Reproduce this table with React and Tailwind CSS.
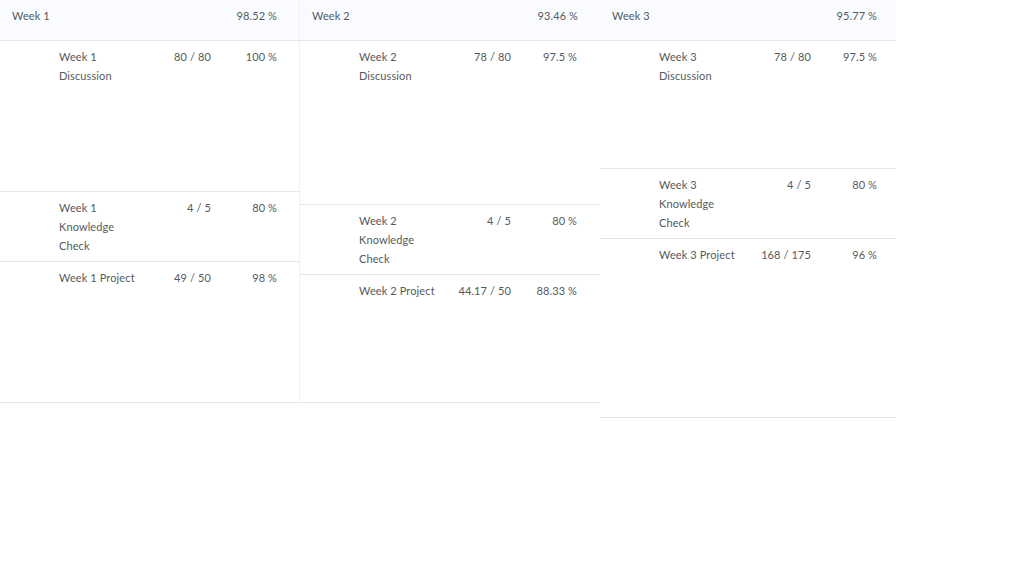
const weeks = [
  {
    name: 'Week 1',
    total: '98.52 %',
    border: true,
    rows: [
      { name: 'Week 1 Discussion', score: '80 / 80', pct: '100 %', h: 'h-[151px]' },
      { name: 'Week 1 Knowledge Check', score: '4 / 5', pct: '80 %', h: 'h-[70px]' },
      { name: 'Week 1 Project', score: '49 / 50', pct: '98 %', h: 'h-[141px]' },
    ],
  },
  {
    name: 'Week 2',
    total: '93.46 %',
    rows: [
      { name: 'Week 2 Discussion', score: '78 / 80', pct: '97.5 %', h: 'h-[164px]' },
      { name: 'Week 2 Knowledge Check', score: '4 / 5', pct: '80 %', h: 'h-[70px]' },
      { name: 'Week 2 Project', score: '44.17 / 50', pct: '88.33 %', h: 'h-[128px]' },
    ],
  },
  {
    name: 'Week 3',
    total: '95.77 %',
    narrow: true,
    rows: [
      { name: 'Week 3 Discussion', score: '78 / 80', pct: '97.5 %', h: 'h-[128px]' },
      { name: 'Week 3 Knowledge Check', score: '4 / 5', pct: '80 %', h: 'h-[70px]' },
      { name: 'Week 3 Project', score: '168 / 175', pct: '96 %', h: 'h-[179px]' },
    ],
  },
];

// one grade row: name | points | percent
const GradeRow = ({ row }) => (
  <div className={`${row.h} border-b border-[#e3e5e8] grid grid-cols-[59px_80px_72px_66px] pt-[6px] leading-[19px]`}>
    <div />
    <div>{row.name}</div>
    <div className="text-right whitespace-nowrap">{row.score}</div>
    <div className="text-right whitespace-nowrap">{row.pct}</div>
  </div>
);

const WeekColumn = ({ week }) => (
  <div className={`${week.narrow ? 'w-[296px]' : 'w-[300px]'} ${week.border ? 'border-r border-[#eef0f2]' : ''} self-start`}>
    <div className={`h-[41px] bg-[#f9fbff] border-b border-[#e3e5e8] flex justify-between pl-[12px] ${week.narrow ? 'pr-[19px]' : 'pr-[22px]'} pt-[6px] leading-[19px]`}>
      <span>{week.name}</span>
      <span>{week.total}</span>
    </div>
    {week.rows.map((r) => (
      <GradeRow key={r.name} row={r} />
    ))}
  </div>
);

export default function App() {
  return (
    <div
      className="w-[1024px] h-[576px] bg-white text-[11px] tracking-[0.01em] text-[#565a5c] flex items-start"
      style={{ fontFamily: 'Lato, "Noto Sans", sans-serif' }}
    >
      {weeks.map((w) => (
        <WeekColumn key={w.name} week={w} />
      ))}
    </div>
  );
}
